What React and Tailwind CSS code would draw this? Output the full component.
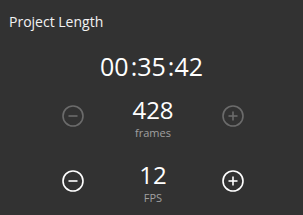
import { useState } from 'react'

function RoundIcon({ plus, dim }) {
  return (
    <svg width="22" height="22" viewBox="0 0 22 22" className={dim ? 'text-[#6b6b6b]' : 'text-white'}>
      <circle cx="11" cy="11" r="10" fill="none" stroke="currentColor" strokeWidth="1.6" />
      <line x1="6.5" y1="11" x2="15.5" y2="11" stroke="currentColor" strokeWidth="1.6" />
      {plus && <line x1="11" y1="6.5" x2="11" y2="15.5" stroke="currentColor" strokeWidth="1.6" />}
    </svg>
  )
}

function Stepper({ value, label, dim }) {
  return (
    <div className="grid grid-cols-[22px_1fr_22px] items-start pl-[62px] pr-[59px]">
      <button className="flex mt-[7px]"><RoundIcon dim={dim} /></button>
      <div className="flex flex-col items-center">
        <span className="text-[24px] leading-[24px] text-white">{value}</span>
        <span className="mt-[4px] text-[11px] leading-[14px] text-[#a0a0a0]">{label}</span>
      </div>
      <button className="flex mt-[7px]"><RoundIcon plus dim={dim} /></button>
    </div>
  )
}

export default function App() {
  const [fps] = useState(12)

  return (
    <div className="w-[303px] h-[215px] bg-[#323232] overflow-hidden" style={{ fontFamily: '"Open Sans", "Noto Sans", sans-serif' }}>
      <div className="pt-[12px] pl-[9px] text-[14px] leading-[20px] text-[#f2f2f2]">Project Length</div>
      <div className="mt-[19px] flex justify-center text-[25px] leading-[30px] text-white">
        <span>00</span>
        <span className="ml-[2px]">:</span>
        <span>35</span>
        <span className="ml-[2px]">:</span>
        <span>42</span>
      </div>
      <div className="mt-[17px]">
        <Stepper value="428" label="frames" dim />
      </div>
      <div className="mt-[23px]">
        <Stepper value={fps} label="FPS" />
      </div>
    </div>
  )
}
